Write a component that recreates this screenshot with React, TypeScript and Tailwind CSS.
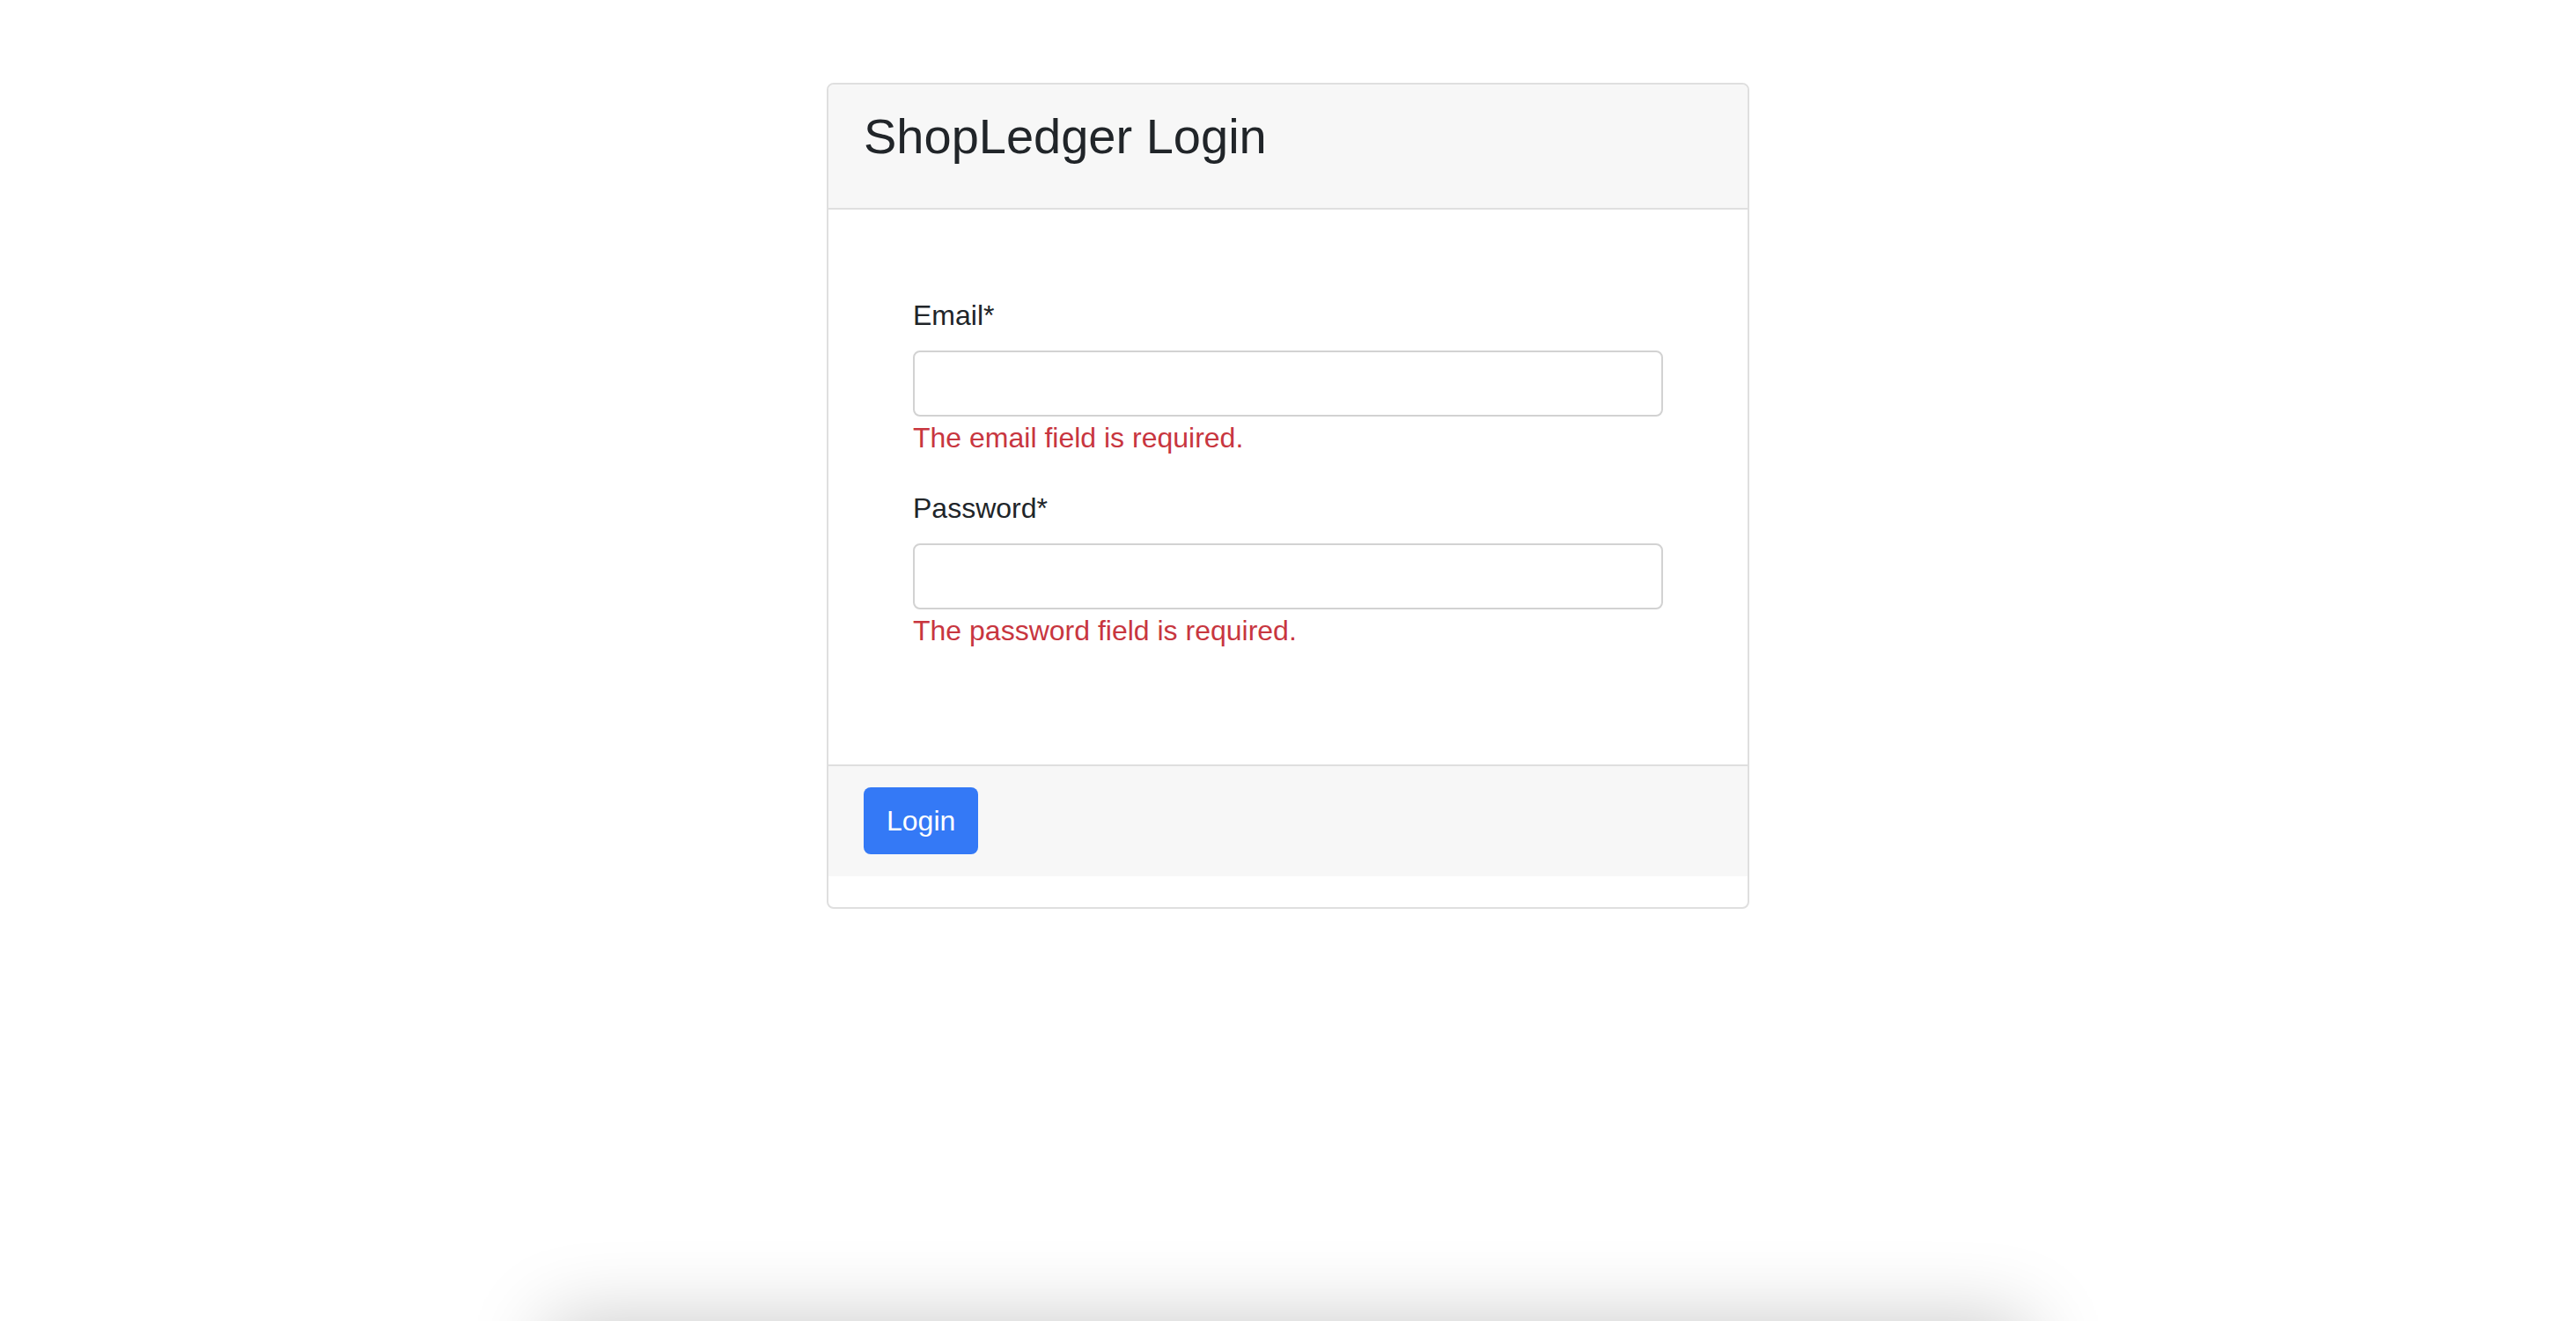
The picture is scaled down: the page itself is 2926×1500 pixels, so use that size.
import React from 'react'

const FIELDS = [
  { id: 'email', label: 'Email*', type: 'email', error: 'The email field is required.' },
  { id: 'password', label: 'Password*', type: 'password', error: 'The password field is required.' },
]

export default function App() {
  return (
    <div className="min-h-[1500px] bg-white font-['Liberation_Sans',Arial,sans-serif] text-[#212529]">
      <div className="mx-auto w-[1048px] pt-[94px]">
        <div className="overflow-hidden rounded-[8px] border-2 border-[#dfdfdf] bg-white pb-[35px]">
          <div className="border-b-2 border-[#dfdfdf] bg-[#f7f7f7] px-[40px] pt-[25px] pb-[48px]">
            <h3 className="text-[56px] leading-[67px] font-normal text-[#212529]">ShopLedger Login</h3>
          </div>

          <form className="p-[96px]">
            {FIELDS.map((f) => (
              <div key={f.id} className="mb-[32px]">
                <label htmlFor={f.id} className="block text-[32px] leading-[48px] mb-[16px]">
                  {f.label}
                </label>
                <input
                  id={f.id}
                  type={f.type}
                  className="block h-[75px] w-full rounded-[8px] border-2 border-[#d2d2d2] bg-white px-[24px] text-[32px] outline-none"
                />
                <div className="text-[32px] leading-[48px] text-[#c8363f]">{f.error}</div>
              </div>
            ))}
          </form>

          <div className="border-t-2 border-[#dfdfdf] bg-[#f7f7f7] px-[40px] pt-[24px] pb-[25px]">
            <button
              type="button"
              className="h-[76px] rounded-[8px] bg-[#3479f6] px-[26px] text-[32px] leading-[48px] text-white"
            >
              Login
            </button>
          </div>
        </div>
      </div>

      {/* shadow of a panel sitting just below the viewport */}
      <div className="fixed left-1/2 top-[1500px] h-[200px] w-[1680px] -translate-x-1/2 bg-white shadow-[0_0_90px_rgba(0,0,0,0.22)]" />
    </div>
  )
}
